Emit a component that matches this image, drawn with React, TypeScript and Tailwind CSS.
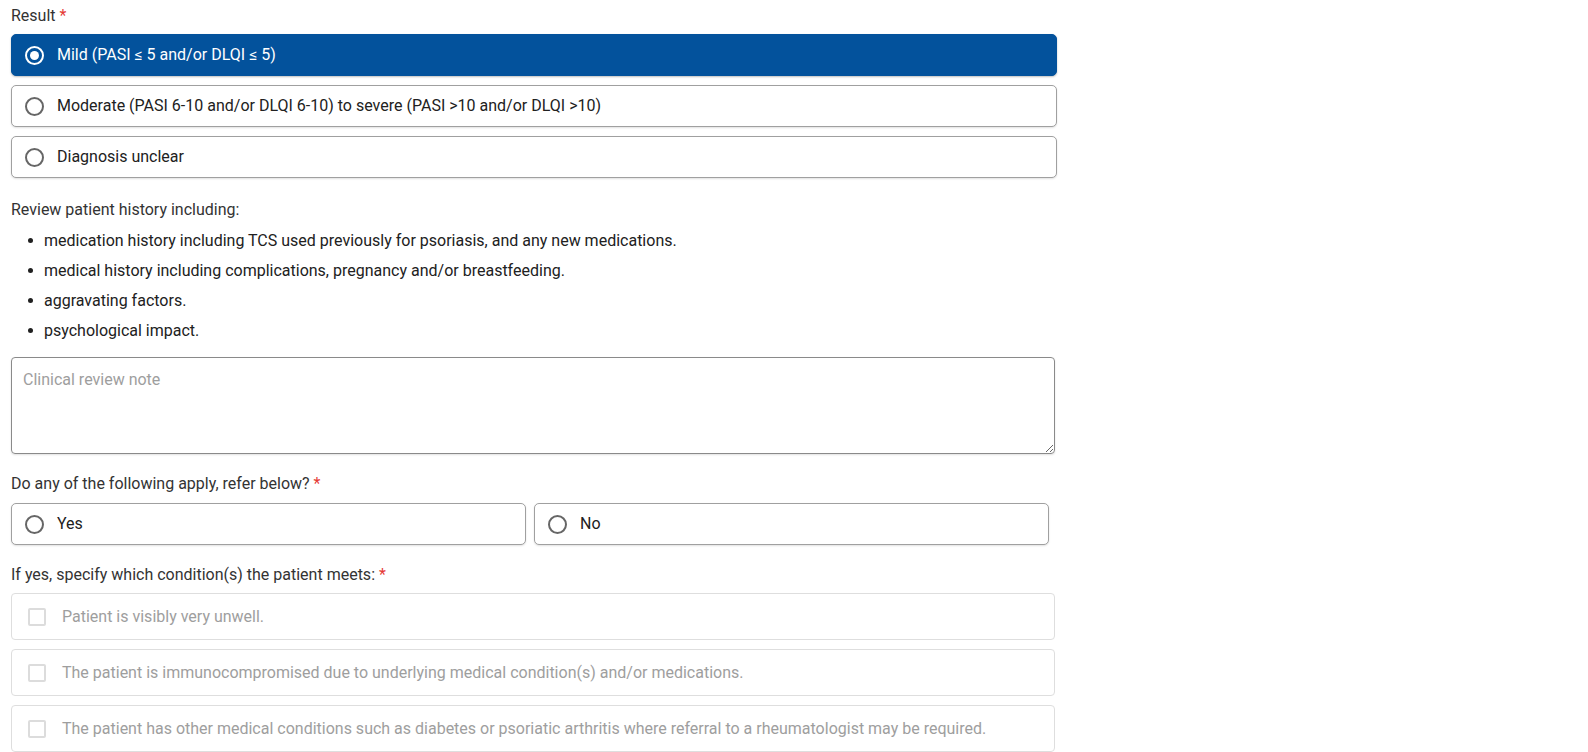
import React, { useState } from "react";

function Radio({ checked }: { checked: boolean }) {
  return (
    <span
      className={`flex items-center justify-center w-[19px] h-[19px] rounded-full border-2 shrink-0 ${
        checked ? "border-white" : "border-[#666666]"
      }`}
    >
      {checked && <span className="w-[9px] h-[9px] rounded-full bg-white" />}
    </span>
  );
}

function RadioCard({
  label,
  checked,
  onClick,
}: {
  label: string;
  checked: boolean;
  onClick: () => void;
}) {
  return (
    <button
      onClick={onClick}
      className={`flex items-center gap-[13px] h-[42px] px-[13px] rounded-[5px] border text-left text-[16px] font-normal w-full ${
        checked
          ? "bg-[#03529c] border-[#03529c] text-white shadow-[0_1px_2px_rgba(0,0,0,0.25)]"
          : "bg-white border-[#a0a0a0] text-[#212121] shadow-[0_1px_2px_rgba(0,0,0,0.12)]"
      }`}
    >
      <Radio checked={checked} />
      <span>{label}</span>
    </button>
  );
}

function Required() {
  return <span className="text-[#e53935]"> *</span>;
}

export default function App() {
  const [result, setResult] = useState("mild");
  const [refer, setRefer] = useState("");

  const results = [
    { id: "mild", label: "Mild (PASI ≤ 5 and/or DLQI ≤ 5)" },
    {
      id: "moderate",
      label: "Moderate (PASI 6-10 and/or DLQI 6-10) to severe (PASI >10 and/or DLQI >10)",
    },
    { id: "unclear", label: "Diagnosis unclear" },
  ];

  const history = [
    "medication history including TCS used previously for psoriasis, and any new medications.",
    "medical history including complications, pregnancy and/or breastfeeding.",
    "aggravating factors.",
    "psychological impact.",
  ];

  const conditions = [
    "Patient is visibly very unwell.",
    "The patient is immunocompromised due to underlying medical condition(s) and/or medications.",
    "The patient has other medical conditions such as diabetes or psoriatic arthritis where referral to a rheumatologist may be required.",
  ];

  return (
    <div className="min-h-screen bg-white font-['Roboto',sans-serif] font-normal text-[#212121]">
      <div className="w-[1046px] ml-[11px] pt-[6px] flex flex-col">
        <div className="text-[16px] leading-[19px] text-[#333333]">
          Result
          <Required />
        </div>

        <div className="mt-[9px] flex flex-col gap-[9px]">
          {results.map((r) => (
            <RadioCard
              key={r.id}
              label={r.label}
              checked={result === r.id}
              onClick={() => setResult(r.id)}
            />
          ))}
        </div>

        <div className="mt-[22px] text-[16px] leading-[19px] text-[#333333]">
          Review patient history including:
        </div>
        <ul className="mt-[12px] flex flex-col gap-[11px] text-[16px] leading-[19px]">
          {history.map((h) => (
            <li key={h} className="flex items-center">
              <span className="w-[5px] h-[5px] rounded-full bg-[#212121] ml-[17px] mr-[11px]" />
              {h}
            </li>
          ))}
        </ul>

        <textarea
          placeholder="Clinical review note"
          className="mt-[17px] w-[1044px] h-[97px] rounded-[4px] border border-[#8a8a8a] px-[11px] py-[12px] text-[16px] leading-[19px] placeholder:text-[#9e9e9e] outline-none shadow-[0_1px_2px_rgba(0,0,0,0.12)]"
        />

        <div className="mt-[20px] text-[16px] leading-[19px] text-[#333333]">
          Do any of the following apply, refer below?
          <Required />
        </div>
        <div className="mt-[10px] w-[1038px] grid grid-cols-2 gap-[8px]">
          <RadioCard label="Yes" checked={refer === "yes"} onClick={() => setRefer("yes")} />
          <RadioCard label="No" checked={refer === "no"} onClick={() => setRefer("no")} />
        </div>

        <div className="mt-[20px] text-[16px] leading-[19px] text-[#333333]">
          If yes, specify which condition(s) the patient meets:
          <Required />
        </div>

        <div className="mt-[9px] flex flex-col gap-[9px] w-[1044px]">
          {conditions.map((c) => (
            <div
              key={c}
              className="flex items-center gap-[16px] h-[47px] px-[16px] rounded-[4px] border border-[#dedede] text-[16px] text-[#9e9e9e]"
            >
              <span className="w-[18px] h-[18px] rounded-[2px] border-2 border-[#dcdcdc] shrink-0" />
              <span>{c}</span>
            </div>
          ))}
        </div>
      </div>
    </div>
  );
}
